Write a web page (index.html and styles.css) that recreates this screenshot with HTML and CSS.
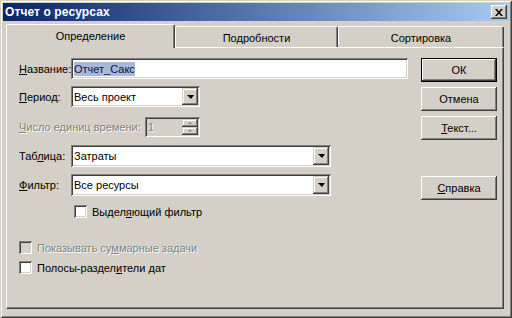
FILE: index.html
```html
<!DOCTYPE html>
<html>
<head>
    <title>Отчет о ресурсах</title>
    <link rel="stylesheet" href="styles.css">
</head>
<body>
    <div class="window">
        <div class="titlebar">
            <span class="title">Отчет о ресурсах</span>
            <span class="close">
                <svg width="8" height="7" viewBox="0 0 8 7"><path d="M0 0h2l2 2.5L6 0h2L5 3.5 8 7H6L4 4.5 2 7H0l3-3.5z" fill="#000"/></svg>
            </span>
        </div>
        <div class="content">
            <div class="tabs">
                <div class="tab active" style="width: 169px">Определение</div>
                <div class="tab" style="width: 163px">Подробности</div>
                <div class="tab" style="width: 166px">Сортировка</div>
            </div>
            <div class="panel">
                <div class="form">
                    <div class="row row-name">
                        <label class="label"><u>Н</u>азвание:</label>
                        <div class="field name-field"><span class="selected">Отчет_Сакс</span></div>
                    </div>
                    <div class="row row-period">
                        <label class="label"><u>П</u>ериод:</label>
                        <div class="field combo period">
                            <span class="value">Весь проект</span>
                            <span class="arrow"><i></i></span>
                        </div>
                    </div>
                    <div class="row row-units">
                        <label class="label wide disabled"><u>Ч</u>исло единиц времени:</label>
                        <div class="field spin">
                            <span class="value disabled">1</span>
                            <span class="spin-btns">
                                <span class="spin-btn"><i class="up"></i></span>
                                <span class="spin-btn"><i class="down"></i></span>
                            </span>
                        </div>
                    </div>
                    <div class="row row-table">
                        <label class="label">Таб<u>л</u>ица:</label>
                        <div class="field combo long">
                            <span class="value">Затраты</span>
                            <span class="arrow"><i></i></span>
                        </div>
                    </div>
                    <div class="row row-filter">
                        <label class="label"><u>Ф</u>ильтр:</label>
                        <div class="field combo long">
                            <span class="value">Все ресурсы</span>
                            <span class="arrow"><i></i></span>
                        </div>
                    </div>
                    <div class="check row-highlight">
                        <span class="box"></span>
                        <span>Выдел<u>я</u>ющий фильтр</span>
                    </div>
                    <div class="check row-summary">
                        <span class="box off"></span>
                        <span class="disabled">Показывать су<u>м</u>марные задачи</span>
                    </div>
                    <div class="check row-bars">
                        <span class="box"></span>
                        <span>Полосы-раздел<u>и</u>тели дат</span>
                    </div>
                </div>
                <div class="buttons">
                    <button class="btn default">ОК</button>
                    <button class="btn">Отмена</button>
                    <button class="btn"><u>Т</u>екст...</button>
                    <button class="btn help"><u>С</u>правка</button>
                </div>
            </div>
        </div>
    </div>
</body>
</html>
```

FILE: styles.css
```css
body {
    margin: 0;
    background-color: #d4d0c8;
    font-family: 'Liberation Sans', Arial, sans-serif;
    font-size: 11px;
    color: #000000;
}
u {
    text-decoration: underline;
    text-underline-offset: 1px;
}
.window {
    width: 512px;
    height: 318px;
    box-sizing: border-box;
    padding: 3px;
    background-color: #d4d0c8;
    box-shadow: inset 1px 1px #d4d0c8, inset -1px -1px #404040, inset 2px 2px #ffffff, inset -2px -2px #808080;
}
.titlebar {
    height: 18px;
    display: flex;
    align-items: center;
    justify-content: space-between;
    padding: 0 2px 0 2px;
    background: linear-gradient(to right, #0a246a, #a6caf0);
}
.title {
    color: #ffffff;
    font-weight: bold;
    font-size: 12px;
    letter-spacing: 0.1px;
}
.close {
    width: 16px;
    height: 14px;
    box-sizing: border-box;
    display: flex;
    align-items: center;
    justify-content: center;
    background-color: #d4d0c8;
    box-shadow: inset -1px -1px #404040, inset 1px 1px #ffffff, inset -2px -2px #808080;
}
.content {
    padding: 3px 0 0 3px;
}
.tabs {
    display: flex;
    align-items: flex-end;
    height: 23px;
}
.tab {
    height: 21px;
    box-sizing: border-box;
    display: flex;
    align-items: center;
    justify-content: center;
    border-top: 1px solid #ffffff;
    border-left: 1px solid #ffffff;
    border-right: 1px solid #404040;
    border-radius: 2px 2px 0 0;
    box-shadow: inset -1px 0 #808080;
    padding-top: 1px;
}
.tab.active {
    height: 24px;
    margin-bottom: -1px;
    position: relative;
    z-index: 1;
    background-color: #d4d0c8;
    padding-top: 0;
    padding-bottom: 2px;
}
.panel {
    width: 498px;
    height: 262px;
    box-sizing: border-box;
    border-top: 1px solid #ffffff;
    border-left: 1px solid #ffffff;
    border-right: 1px solid #404040;
    border-bottom: 1px solid #404040;
    box-shadow: inset -1px -1px #808080;
    display: flex;
    padding: 10px 0 0 12px;
}
.form {
    width: 402px;
}
.row {
    display: flex;
    align-items: center;
}
.label {
    width: 52px;
    flex-shrink: 0;
}
.label.wide {
    width: 126px;
}
.disabled {
    color: #808080;
    text-shadow: 1px 1px #ffffff;
}
.field {
    box-sizing: border-box;
    background-color: #ffffff;
    box-shadow: inset 1px 1px #808080, inset -1px -1px #ffffff, inset 2px 2px #404040, inset -2px -2px #d4d0c8;
    display: flex;
    align-items: center;
    padding: 2px 2px 2px 3px;
}
.name-field {
    width: 337px;
    height: 21px;
}
.selected {
    background-color: #a8b8da;
    color: #0a1440;
    padding: 1px 0;
}
.row-name {
    height: 21px;
}
.row-period {
    margin-top: 7px;
}
.row-units {
    margin-top: 10px;
}
.row-table {
    margin-top: 8px;
}
.row-filter {
    margin-top: 7px;
}
.combo {
    justify-content: space-between;
    height: 21px;
}
.combo.period {
    width: 129px;
}
.combo.long {
    width: 260px;
    height: 22px;
}
.arrow {
    width: 16px;
    height: 100%;
    box-sizing: border-box;
    display: flex;
    align-items: center;
    justify-content: center;
    background-color: #d4d0c8;
    box-shadow: inset -1px -1px #404040, inset 1px 1px #d4d0c8, inset -2px -2px #808080, inset 2px 2px #ffffff;
}
.arrow i {
    width: 0;
    height: 0;
    border-left: 4px solid transparent;
    border-right: 3px solid transparent;
    border-top: 4px solid #000000;
}
.spin {
    width: 55px;
    height: 20px;
    background-color: #d4d0c8;
    justify-content: space-between;
}
.spin-btns {
    display: flex;
    flex-direction: column;
    width: 16px;
    height: 100%;
}
.spin-btn {
    flex: 1;
    display: flex;
    align-items: center;
    justify-content: center;
    box-shadow: inset -1px -1px #404040, inset 1px 1px #d4d0c8, inset -2px -2px #808080, inset 2px 2px #ffffff;
}
.spin-btn i {
    width: 0;
    height: 0;
    border-left: 2px solid transparent;
    border-right: 2px solid transparent;
}
.spin-btn .up {
    border-bottom: 2px solid #808080;
}
.spin-btn .down {
    border-top: 2px solid #808080;
}
.check {
    display: flex;
    align-items: center;
    height: 13px;
}
.check .box {
    width: 13px;
    height: 13px;
    box-sizing: border-box;
    background-color: #ffffff;
    box-shadow: inset 1px 1px #808080, inset -1px -1px #ffffff, inset 2px 2px #404040, inset -2px -2px #d4d0c8;
    margin-right: 5px;
}
.check .box.off {
    background-color: #d4d0c8;
}
.row-highlight {
    margin-top: 9px;
    margin-left: 55px;
}
.row-summary {
    margin-top: 23px;
}
.row-bars {
    margin-top: 7px;
}
.buttons {
    display: flex;
    flex-direction: column;
}
.btn {
    width: 76px;
    height: 24px;
    box-sizing: border-box;
    font-family: inherit;
    font-size: 11px;
    color: #000000;
    background-color: #d4d0c8;
    border: none;
    padding: 0;
    box-shadow: inset -1px -1px #404040, inset 1px 1px #ffffff, inset -2px -2px #808080;
    margin-bottom: 5px;
}
.btn.default {
    border: 1px solid #000000;
}
.btn.help {
    margin-top: 31px;
}
```
